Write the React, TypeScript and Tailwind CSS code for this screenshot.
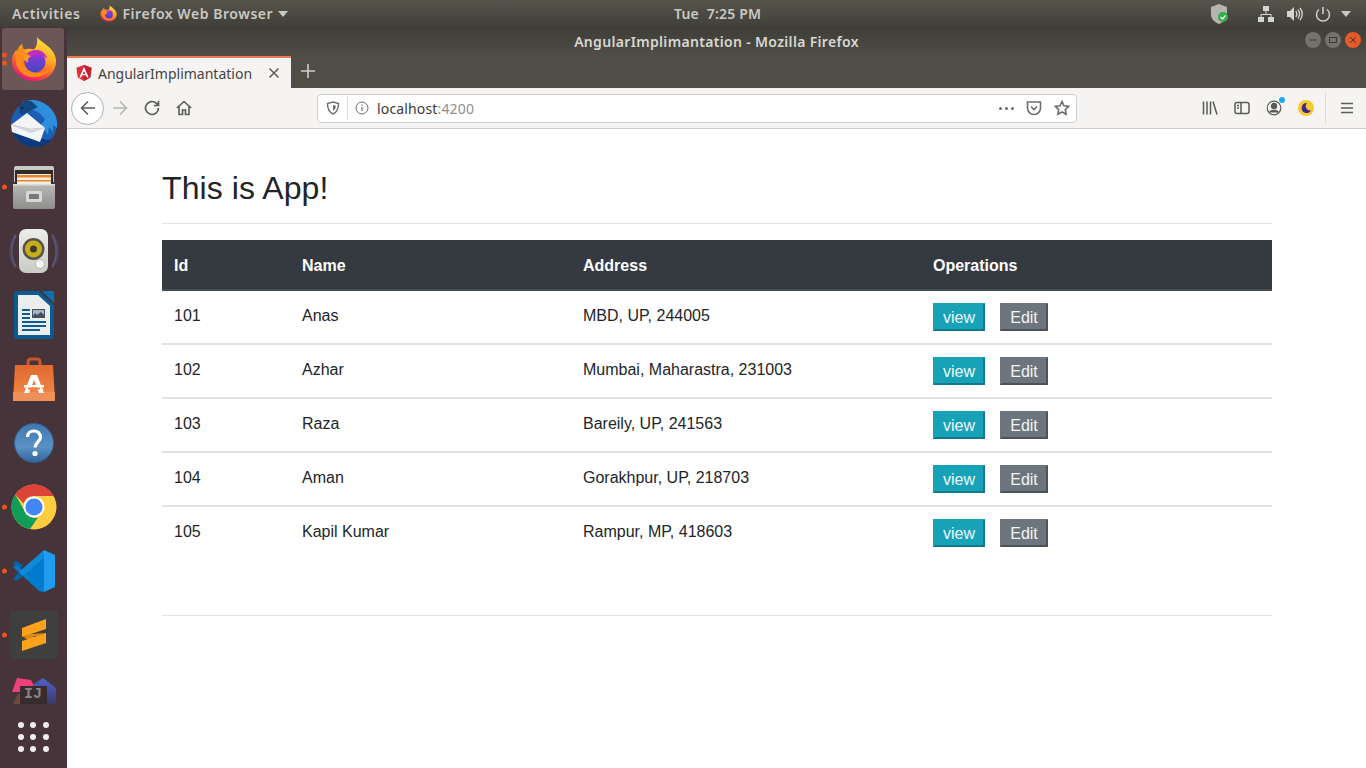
import React from "react";

const ROWS = [
  { id: 101, name: "Anas", address: "MBD, UP, 244005" },
  { id: 102, name: "Azhar", address: "Mumbai, Maharastra, 231003" },
  { id: 103, name: "Raza", address: "Bareily, UP, 241563" },
  { id: 104, name: "Aman", address: "Gorakhpur, UP, 218703" },
  { id: 105, name: "Kapil Kumar", address: "Rampur, MP, 418603" },
];

function FirefoxLogo({ size }: { size: number }) {
  return (
    <svg width={size} height={size} viewBox="0 0 48 48">
      <defs>
        <linearGradient id={`ffa${size}`} x1="0.8" y1="0" x2="0.35" y2="1">
          <stop offset="0" stopColor="#ffe84a" />
          <stop offset="0.4" stopColor="#ffb01f" />
          <stop offset="0.72" stopColor="#ff5a2c" />
          <stop offset="1" stopColor="#e7117f" />
        </linearGradient>
        <linearGradient id={`ffb${size}`} x1="0.5" y1="0" x2="0.5" y2="1">
          <stop offset="0" stopColor="#a82fd8" />
          <stop offset="0.5" stopColor="#6a3fd0" />
          <stop offset="1" stopColor="#4a45c0" />
        </linearGradient>
      </defs>
      <path fill={`url(#ffa${size})`} d="M27 1C31 6 38 9 42 14C46 19 47 23 47 26C47 38 37 47 24 47C11 47 1 37 1 26C1 21 3 17 6 14L6 17C7 13 9 10 12 8C11 11 12 13 14 14C17 13 21 13 24 14C27 11 28 6 27 1Z" />
      <path fill="#ff8a1c" d="M12 10C7 14 4 20 5 27C6 36 14 43 24 43C31 43 37 40 41 34C36 38 30 39 25 38C17 36 12 30 13 24C14 22 15 20 17 19C14 17 12 14 12 10Z" />
      <circle cx="25" cy="27" r="11" fill={`url(#ffb${size})`} />
      <path fill="#c42bc0" d="M15 21C18 15 26 13 32 16C35 18 37 21 38 24C34 20 29 19 25 20C21 21 18 22 15 21Z" />
      <path fill="#ff9a20" d="M13 22C14 20 15 19 17 19L21 21C18 22 17 25 18 28C15 27 13 25 13 22Z" />
    </svg>
  );
}

function Thunderbird() {
  return (
    <svg width="50" height="50" viewBox="0 0 50 50">
      <circle cx="25" cy="26" r="23" fill="#1a5fb4" />
      <path fill="#0b3a80" d="M2 28c1 11 11 21 23 21 8 0 14-3 18-8-3 1-6 1-8 0-8 0-20-4-33-13z" />
      <path fill="#2d8fdc" d="M13 4c9-4 20-2 28 6 6 6 8 13 7 20l-4-3 0 7-4-5-1 8-4-6-2 6-3-8L36 22C32 14 22 9 13 12z" />
      <path fill="#13467f" d="M11 8c1-4 6-7 11-5l7 6-12 6-5 2c-2-3-2-6-1-9z" />
      <circle cx="13" cy="10" r="1.100" fill="#0a1c33" />
      <path fill="#f5f5f7" d="M2 27L18 15l18 15-5 14L3 34z" />
      <path fill="#d2d3dc" d="M2 27l20 5 14-2-14 5z" />
      <path fill="none" stroke="#b9bac6" strokeWidth="0.700" d="M2 27L21 31l15-1" />
    </svg>
  );
}

function Files() {
  return (
    <svg width="42" height="44" viewBox="0 0 42 44">
      <defs>
        <linearGradient id="cab" x1="0" y1="0" x2="0" y2="1">
          <stop offset="0" stopColor="#b7b7b5" />
          <stop offset="1" stopColor="#8f8f8d" />
        </linearGradient>
      </defs>
      <path fill="#c9c9c7" d="M1 3q0-2 2-2h36q2 0 2 2v14H1z" />
      <rect x="2" y="5" width="38" height="14" fill="#2e2b28" />
      <rect x="4" y="9" width="34" height="10" fill="#f5efe2" />
      <rect x="4" y="10" width="34" height="2.500" fill="#e8862e" />
      <rect x="4" y="15" width="34" height="1.500" fill="#e8862e" />
      <path fill="url(#cab)" d="M0 19h42v23q0 2-2 2H2q-2 0-2-2z" />
      <rect y="19" width="42" height="1.500" fill="#dcdcda" />
      <rect x="13" y="26" width="16" height="11" rx="1.500" fill="#d8d8d6" />
      <rect x="16" y="29" width="10" height="5" rx="0.500" fill="#77777a" />
    </svg>
  );
}

function Rhythmbox() {
  return (
    <svg width="50" height="44" viewBox="0 0 50 44">
      <defs>
        <linearGradient id="spk" x1="0" y1="0" x2="0" y2="1">
          <stop offset="0" stopColor="#eceeea" />
          <stop offset="1" stopColor="#c7cac5" />
        </linearGradient>
      </defs>
      <path d="M7 6C1 15 1 29 7 38M43 6c6 9 6 23 0 32" fill="none" stroke="#575470" strokeWidth="2.500" />
      <path d="M3 10c-3 8-3 16 0 24M47 10c3 8 3 16 0 24" fill="none" stroke="#4f4258" strokeWidth="1.500" />
      <rect x="10" y="0" width="29" height="44" rx="7" fill="url(#spk)" />
      <circle cx="24.500" cy="20" r="11" fill="#57544a" />
      <circle cx="24.500" cy="20" r="8.500" fill="#c9ae1c" />
      <circle cx="24.500" cy="20" r="3.500" fill="#403c2a" />
      <circle cx="31" cy="35" r="4.500" fill="#f3f3f1" stroke="#b9bbb7" />
    </svg>
  );
}

function Writer() {
  return (
    <svg width="40" height="48" viewBox="0 0 40 48">
      <path fill="#0d5a8f" d="M3 0h22l15 14v31q0 3-3 3H3q-3 0-3-3V3q0-3 3-3z" />
      <path fill="#0c6fae" d="M28 0h12v12z" />
      <path fill="#ecedef" d="M4 4h20l12 11v29H4z" />
      <rect x="18" y="18" width="13" height="9" fill="#44505e" />
      <path fill="#9fb5c8" d="M19 19h11v5l-3-3-4 3-2-2-2 3z" />
      <rect x="8" y="18" width="8" height="2" fill="#0f5c8e" />
      <rect x="8" y="22" width="8" height="2" fill="#0f5c8e" />
      <rect x="8" y="26" width="8" height="2" fill="#0f5c8e" />
      <rect x="8" y="30" width="24" height="2" fill="#0f5c8e" />
      <rect x="8" y="34" width="24" height="2" fill="#0f5c8e" />
      <rect x="8" y="38" width="18" height="2" fill="#0f5c8e" />
    </svg>
  );
}

function Software() {
  return (
    <svg width="42" height="44" viewBox="0 0 42 44">
      <defs>
        <linearGradient id="bag" x1="0" y1="0" x2="0" y2="1">
          <stop offset="0" stopColor="#e06a30" />
          <stop offset="1" stopColor="#f58a48" />
        </linearGradient>
      </defs>
      <path d="M15 14V5q0-3 3-3h6q3 0 3 3v9" fill="none" stroke="#c9562a" strokeWidth="3" />
      <path fill="url(#bag)" d="M2 8h38l2 36H0z" />
      <rect y="35" width="42" height="9" fill="#ee9058" />
      <path fill="#fff" d="M18 18h6l7 18h-5l-5-13-5 13h-5z" />
      <rect x="11" y="28" width="20" height="2.500" fill="#fff" />
      <rect x="15" y="30.500" width="12" height="2" fill="#f08144" />
    </svg>
  );
}

function Help() {
  return (
    <svg width="40" height="40" viewBox="0 0 40 40">
      <defs>
        <linearGradient id="hlp" x1="0" y1="0" x2="0" y2="1">
          <stop offset="0" stopColor="#3f78b0" />
          <stop offset="0.6" stopColor="#5b91c4" />
          <stop offset="1" stopColor="#33659a" />
        </linearGradient>
      </defs>
      <circle cx="20" cy="20" r="19.500" fill="url(#hlp)" stroke="#2f6194" />
      <path d="M13.500 14c0-4 3-6 6.500-6s6.500 2.500 6.500 6c0 5-5.500 5-5.500 10.500" fill="none" stroke="#fff" strokeWidth="3.200" />
      <circle cx="21" cy="30.500" r="2.600" fill="#fff" />
    </svg>
  );
}

function Chrome() {
  return (
    <svg width="46" height="46" viewBox="0 0 46 46">
      <circle cx="23" cy="23" r="22.500" fill="#ffcd40" />
      <path fill="#db4437" d="M23 .5c8.500 0 16 4.700 19.800 11.500H23a11 11 0 0 0-10.500 7.500L4.200 10.500C8.300 4.500 15.200.5 23 .5z" />
      <path fill="#0f9d58" d="M4.200 10.500l9.500 16.500A11 11 0 0 0 27 33.500L19 45C8.500 43.200.5 34 .5 23c0-4.600 1.400-8.900 3.700-12.500z" />
      <circle cx="23" cy="23" r="10.500" fill="#fff" />
      <circle cx="23" cy="23" r="8.500" fill="#4285f4" />
    </svg>
  );
}

function VsCode() {
  return (
    <svg width="44" height="44" viewBox="0 0 44 44">
      <path fill="#0065a9" d="M1 14l3-2 7 4-4 5zM7 23l4 4-7 5-3-2z" />
      <path fill="#007acc" d="M32 1L11 21 4 16l-3 2 26 24 5 1z" />
      <path fill="#0f8ad8" d="M32 1L7 23l4 4L32 9z" />
      <path fill="#1f9cf0" d="M32 1l11 5v32l-11 5z" />
    </svg>
  );
}

function Sublime() {
  return (
    <div className="flex h-12 w-12 items-center justify-center rounded-[3px] bg-[#3f3f3f]">
      <svg width="24" height="32" viewBox="0 0 24 32">
        <path fill="#e88a12" d="M0 18l8-2.700L24 14l-8 2.700z" />
        <path fill="#e88a12" d="M6 16l18 5-8 3L2 19z" />
        <path fill="#ffa11a" d="M24 0v10L0 18V9z" />
        <path fill="#ffa11a" d="M0 22l24-8v10L0 32z" />
      </svg>
    </div>
  );
}

function Intellij() {
  return (
    <div className="relative mb-[18px] h-[27px] w-[46px] overflow-hidden">
      <svg width="46" height="27" viewBox="0 0 46 27" className="absolute inset-0">
        <defs>
          <linearGradient id="ijb" x1="0" y1="0" x2="0" y2="1">
            <stop offset="0" stopColor="#4d62cb" />
            <stop offset="1" stopColor="#3b3a6a" />
          </linearGradient>
        </defs>
        <path fill="#f0407c" d="M1 15L6 1l14 2 6 12z" />
        <path fill="url(#ijb)" d="M23 7l9-6 13 10v16H22z" />
        <path fill="#8a5a38" d="M2 27l5-10h8l2 10z" opacity="0.6" />
      </svg>
      <div className="absolute bottom-0 left-[9px] flex h-[18px] w-[27px] items-center justify-center bg-[#362c2e] font-['Liberation_Mono',monospace] text-[15px] font-bold leading-none text-[#8a8585]">
        IJ
      </div>
    </div>
  );
}

function DockItem({ dots = 0, active = false, children }: { dots?: number; active?: boolean; children: React.ReactNode }) {
  return (
    <div className="relative flex h-16 w-[67px] items-center justify-center">
      {active && <div className="absolute bottom-px left-0.5 right-[3px] top-px rounded-[3px] bg-[#6b5658]" />}
      {dots > 0 && (
        <div className="absolute left-0.5 top-1/2 flex -translate-y-1/2 flex-col gap-[3px]">
          {dots > 0 && <div className="h-[5px] w-[5px] rounded-full bg-[#e95420]" />}
          {dots > 1 && <div className="h-[5px] w-[5px] rounded-full bg-[#e95420]" />}
        </div>
      )}
      <div className="relative flex">{children}</div>
    </div>
  );
}

function Dock() {
  return (
    <div className="flex w-[67px] shrink-0 flex-col bg-[#46343a]">
      <DockItem active dots={2}><FirefoxLogo size={46} /></DockItem>
      <DockItem><Thunderbird /></DockItem>
      <DockItem dots={1}><Files /></DockItem>
      <DockItem><Rhythmbox /></DockItem>
      <DockItem><Writer /></DockItem>
      <DockItem><Software /></DockItem>
      <DockItem><Help /></DockItem>
      <DockItem dots={1}><Chrome /></DockItem>
      <DockItem dots={1}><VsCode /></DockItem>
      <DockItem dots={1}><Sublime /></DockItem>
      <DockItem><Intellij /></DockItem>
      <div className="mt-[-9px] grid w-[67px] grid-cols-3 justify-items-center gap-y-[6px] px-[15px]">
        {Array.from({ length: 9 }).map((_, i) => (
          <div key={i} className="h-[6px] w-[6px] rounded-full bg-[#f0eeee]" />
        ))}
      </div>
    </div>
  );
}

function TopBar() {
  return (
    <div className="relative flex h-[27px] shrink-0 items-center bg-gradient-to-b from-[#57544c] to-[#403f39] font-['Noto_Sans',sans-serif] text-[14px] font-semibold text-[#c9c9c4]">
      <span className="ml-3 tracking-[0.6px]">Activities</span>
      <span className="ml-5 flex"><FirefoxLogo size={17} /></span>
      <span className="ml-[5px] tracking-[0.55px]">Firefox Web Browser</span>
      <svg width="10" height="6" viewBox="0 0 10 6" className="ml-[5px]"><path d="M0 0h10L5 6z" fill="#c9c9c4" /></svg>
      <span className="absolute left-[674px] tracking-[0.2px]">Tue&nbsp;&nbsp;7:25 PM</span>
      <div className="ml-auto flex items-center">
        <svg width="20" height="22" viewBox="0 0 20 22">
          <path d="M9 1l8 3v7c0 5-3 8-8 10-5-2-8-5-8-10V4z" fill="#b5b5b0" />
          <circle cx="13" cy="14" r="5" fill="#2fb04a" />
          <path d="M10.500 14l2 2 3-3.500" fill="none" stroke="#fff" strokeWidth="1.200" />
        </svg>
        <svg width="16" height="16" viewBox="0 0 16 16" className="ml-7" fill="#d4d4d0">
          <rect x="5" y="0" width="6" height="5" />
          <rect x="0" y="11" width="6" height="5" />
          <rect x="10" y="11" width="6" height="5" />
          <path d="M7.500 5h1v3h5v3h-1V9H3.500v2h-1V8h5z" />
        </svg>
        <svg width="16" height="16" viewBox="0 0 16 16" className="ml-[13px]" fill="none" stroke="#d4d4d0">
          <path d="M0 5h3l4-4v14l-4-4H0z" fill="#d4d4d0" stroke="none" />
          <path d="M9 5c1 2 1 4 0 6M11 3.500c2 3 2 6 0 9M13 2c3 4 3 8 0 12" strokeWidth="1.300" />
        </svg>
        <svg width="16" height="16" viewBox="0 0 16 16" className="ml-3" fill="none" stroke="#d4d4d0" strokeWidth="1.500">
          <path d="M4 3.500a6.500 6.500 0 1 0 8 0M8 1v7" />
        </svg>
        <svg width="10" height="6" viewBox="0 0 10 6" className="ml-[10px] mr-[15px]"><path d="M0 0h10L5 6z" fill="#c9c9c4" /></svg>
      </div>
    </div>
  );
}

function WindowButton({ color, children }: { color: string; children: React.ReactNode }) {
  return (
    <div className={`flex h-4 w-4 items-center justify-center rounded-full ${color}`}>
      <svg width="10" height="10" viewBox="0 0 10 10" fill="none" stroke="#3a3a36" strokeWidth="1">{children}</svg>
    </div>
  );
}

function TitleBar() {
  return (
    <div className="relative flex h-[29px] shrink-0 items-center justify-center bg-gradient-to-b from-[#3e3d38] to-[#4f4d46] font-['Noto_Sans',sans-serif] text-[14px] font-semibold tracking-[0.33px] text-[#d8d8d3]">
      <span>AngularImplimantation - Mozilla Firefox</span>
      <div className="absolute right-[5px] top-[5px] flex gap-1">
        <WindowButton color="bg-[#74726c]"><path d="M1.500 5h7" /></WindowButton>
        <WindowButton color="bg-[#74726c]"><rect x="1.500" y="2.500" width="7" height="5" /></WindowButton>
        <WindowButton color="bg-[#e65a27]"><path d="M2 2l6 6M8 2L2 8" /></WindowButton>
      </div>
    </div>
  );
}

function TabStrip() {
  return (
    <div className="flex h-8 shrink-0 bg-[#4f4d46] font-['Noto_Sans',sans-serif]">
      <div className="flex w-[224px] items-center border-t-2 border-[#ec7a52] bg-[#f5f4f2] pl-[9px] text-[14px] text-[#45443f]">
        <svg width="16" height="16" viewBox="0 0 16 16">
          <path d="M8 0L.5 2.700l1.200 9.800L8 16l6.300-3.500 1.200-9.800z" fill="#dd2c3a" />
          <path d="M8 0v16l6.300-3.500 1.200-9.800z" fill="#c3202e" />
          <path d="M8 2L3.300 12.500h1.800l.9-2.300h4l.9 2.300h1.800zM8 6l1.400 2.900H6.600z" fill="#fff" />
        </svg>
        <span className="ml-[6px]">AngularImplimantation</span>
        <svg width="12" height="12" viewBox="0 0 12 12" className="ml-auto mr-[11px]" fill="none" stroke="#5b5a56" strokeWidth="1.500">
          <path d="M1.500 1.500l9 9M10.500 1.500l-9 9" />
        </svg>
      </div>
      <svg width="14" height="14" viewBox="0 0 14 14" className="ml-[10px] mt-[8px]" fill="none" stroke="#cfcec9" strokeWidth="1.600">
        <path d="M7 0v14M0 7h14" />
      </svg>
    </div>
  );
}

const ICON = "#5b5b5a";

function NavBar() {
  return (
    <div className="flex h-[41px] shrink-0 items-center border-b border-[#cfcecc] bg-[#f5f4f2] font-['Noto_Sans',sans-serif]">
      <div className="ml-[4px] flex h-[33px] w-[33px] items-center justify-center rounded-full border border-[#b1b0ae] bg-white">
        <svg width="16" height="16" viewBox="0 0 16 16" fill="none" stroke={ICON} strokeWidth="1.600"><path d="M15 8H1.500M8 1.500L1.500 8 8 14.500" /></svg>
      </div>
      <svg width="16" height="16" viewBox="0 0 16 16" className="ml-2" fill="none" stroke="#b5b5b3" strokeWidth="1.600"><path d="M1 8h13.500M8 1.500L14.500 8 8 14.500" /></svg>
      <svg width="16" height="16" viewBox="0 0 16 16" className="ml-4" fill="none" stroke={ICON} strokeWidth="1.700"><path d="M14.500 8a6.500 6.500 0 1 1-2-4.700L14.500 5M14.500 1v4.500H10" /></svg>
      <svg width="16" height="16" viewBox="0 0 16 16" className="ml-4" fill="none" stroke={ICON} strokeWidth="1.600"><path d="M.8 8L8 1.500 15.200 8M3 6.500v8h3.500V10h3v4.500H13v-8" /></svg>
      <div className="ml-[125px] flex h-[29px] w-[760px] items-center rounded-[4px] border border-[#cfcecc] bg-white text-[14px]">
        <svg width="14" height="14" viewBox="0 0 14 14" className="ml-2" fill="none" stroke="#6e6e6c" strokeWidth="1.400"><path d="M7 1l5.500 1.500c0 5-1 8.500-5.500 10.500-4.500-2-5.500-5.500-5.500-10.500z" /><path d="M7 4l2.800.8c0 2.500-.8 4-2.800 5z" fill="#6e6e6c" stroke="none" /></svg>
        <div className="ml-[7px] h-[24px] w-px bg-[#dcdcda]" />
        <svg width="14" height="14" viewBox="0 0 14 14" className="ml-[7px]" fill="none" stroke="#6e6e6c" strokeWidth="1"><circle cx="7" cy="7" r="6" /><path d="M7 6v4M7 3.500v1.300" strokeWidth="1.200" /></svg>
        <span className="ml-[8px] tracking-[0.15px] text-[#3b3b3a]">localhost<span className="text-[#8f8f8d]">:4200</span></span>
        <div className="ml-auto flex items-center">
          <div className="flex gap-[3px]">
            <div className="h-[3px] w-[3px] rounded-full bg-[#6e6e6c]" />
            <div className="h-[3px] w-[3px] rounded-full bg-[#6e6e6c]" />
            <div className="h-[3px] w-[3px] rounded-full bg-[#6e6e6c]" />
          </div>
          <svg width="16" height="16" viewBox="0 0 16 16" className="ml-3" fill="none" stroke="#6e6e6c" strokeWidth="1.600"><path d="M1.500 2h13v6a6.500 6.500 0 0 1-13 0z" /><path d="M5 6.500L8 9.500l3-3" /></svg>
          <svg width="16" height="16" viewBox="0 0 16 16" className="ml-3 mr-[6px]" fill="none" stroke="#6e6e6c" strokeWidth="1.600"><path d="M8 1.500l2 4.300 4.700.6-3.400 3.200.9 4.700L8 12l-4.200 2.300.9-4.700L1.300 6.400 6 5.800z" /></svg>
        </div>
      </div>
      <div className="ml-auto flex items-center">
        <svg width="16" height="16" viewBox="0 0 16 16" fill="none" stroke={ICON} strokeWidth="1.500"><path d="M1.500 1.500v13M5 1.500v13M8.500 1.500v13M11 1.500l4 13" /></svg>
        <svg width="16" height="16" viewBox="0 0 16 16" className="ml-4" fill="none" stroke={ICON} strokeWidth="1.500"><rect x="1" y="2.500" width="14" height="11" rx="2" /><path d="M7 2.500v11M3 5.500h2M3 8h2" /></svg>
        <div className="relative ml-4 h-4 w-4">
          <svg width="16" height="16" viewBox="0 0 16 16" fill="none" stroke={ICON} strokeWidth="1.200"><circle cx="8" cy="8" r="6.800" /><circle cx="8" cy="6" r="2.600" fill={ICON} /><path d="M3.500 12.500c1-3 8-3 9 0" fill={ICON} /></svg>
          <div className="absolute right-[-3px] top-[-3px] h-[6px] w-[6px] rounded-full bg-[#20a8f4]" />
        </div>
        <svg width="16" height="16" viewBox="0 0 16 16" className="ml-4">
          <circle cx="8" cy="8" r="8" fill="#f6c92e" />
          <path d="M9 3a5 5 0 1 0 4 7.500A4.500 4.500 0 0 1 9 3z" fill="#3b2a8c" />
        </svg>
        <div className="ml-[11px] h-8 w-px bg-[#dcdcda]" />
        <svg width="14" height="12" viewBox="0 0 14 12" className="ml-[14px] mr-[12px]" fill="none" stroke={ICON} strokeWidth="1.600"><path d="M1 1.500h12M1 6h12M1 10.500h12" /></svg>
      </div>
    </div>
  );
}

export default function App() {
  return (
    <div className="flex h-screen w-full flex-col overflow-hidden bg-white">
      <TopBar />
      <div className="flex min-h-0 flex-1">
        <Dock />
        <div className="flex min-w-0 flex-1 flex-col">
          <TitleBar />
          <TabStrip />
          <NavBar />
          <div className="flex-1 px-[95px] font-['Liberation_Sans',Arial,sans-serif] text-[16px] text-[#212529]">
            <h1 className="mt-10 text-[32px] leading-[38px] tracking-[0.08px]">This is App!</h1>
            <div className="mt-4 h-px w-[1110px] bg-[#e5e5e5]" />
            <table className="mt-4 w-[1110px] table-fixed border-collapse">
              <colgroup>
                <col className="w-[128px]" />
                <col className="w-[281px]" />
                <col className="w-[350px]" />
                <col className="w-[351px]" />
              </colgroup>
              <thead>
                <tr className="h-[50px] border-b-2 border-[#454d55] bg-[#343a40] text-left text-white">
                  <th className="px-3 pt-0.5 font-bold">Id</th>
                  <th className="px-3 pt-0.5 font-bold">Name</th>
                  <th className="px-3 pt-0.5 font-bold">Address</th>
                  <th className="px-3 pt-0.5 font-bold">Operations</th>
                </tr>
              </thead>
              <tbody>
                {ROWS.map((row, i) => (
                  <tr key={row.id} className={`h-[54px] align-top ${i < ROWS.length - 1 ? "border-b-2 border-[#dee2e6]" : ""}`}>
                    <td className="px-3 pt-[13px]">{row.id}</td>
                    <td className="px-3 pt-[13px]">{row.name}</td>
                    <td className="px-3 pt-[13px]">{row.address}</td>
                    <td className="px-3 pt-3">
                      <div className="flex gap-[15px]">
                        <button className="h-[28px] w-[52px] border-2 border-[#17a2b8] border-b-[#0f7b8c] border-r-[#0f7b8c] bg-[#17a2b8] pt-0.5 leading-none text-[#eefafc]">view</button>
                        <button className="h-[28px] w-[48px] border-2 border-[#6c757d] border-b-[#4c5359] border-r-[#4c5359] bg-[#6c757d] pt-0.5 leading-none text-[#f4f5f6]">Edit</button>
                      </div>
                    </td>
                  </tr>
                ))}
              </tbody>
            </table>
            <div className="mt-[55px] h-px w-[1110px] bg-[#e5e5e5]" />
          </div>
        </div>
      </div>
    </div>
  );
}
